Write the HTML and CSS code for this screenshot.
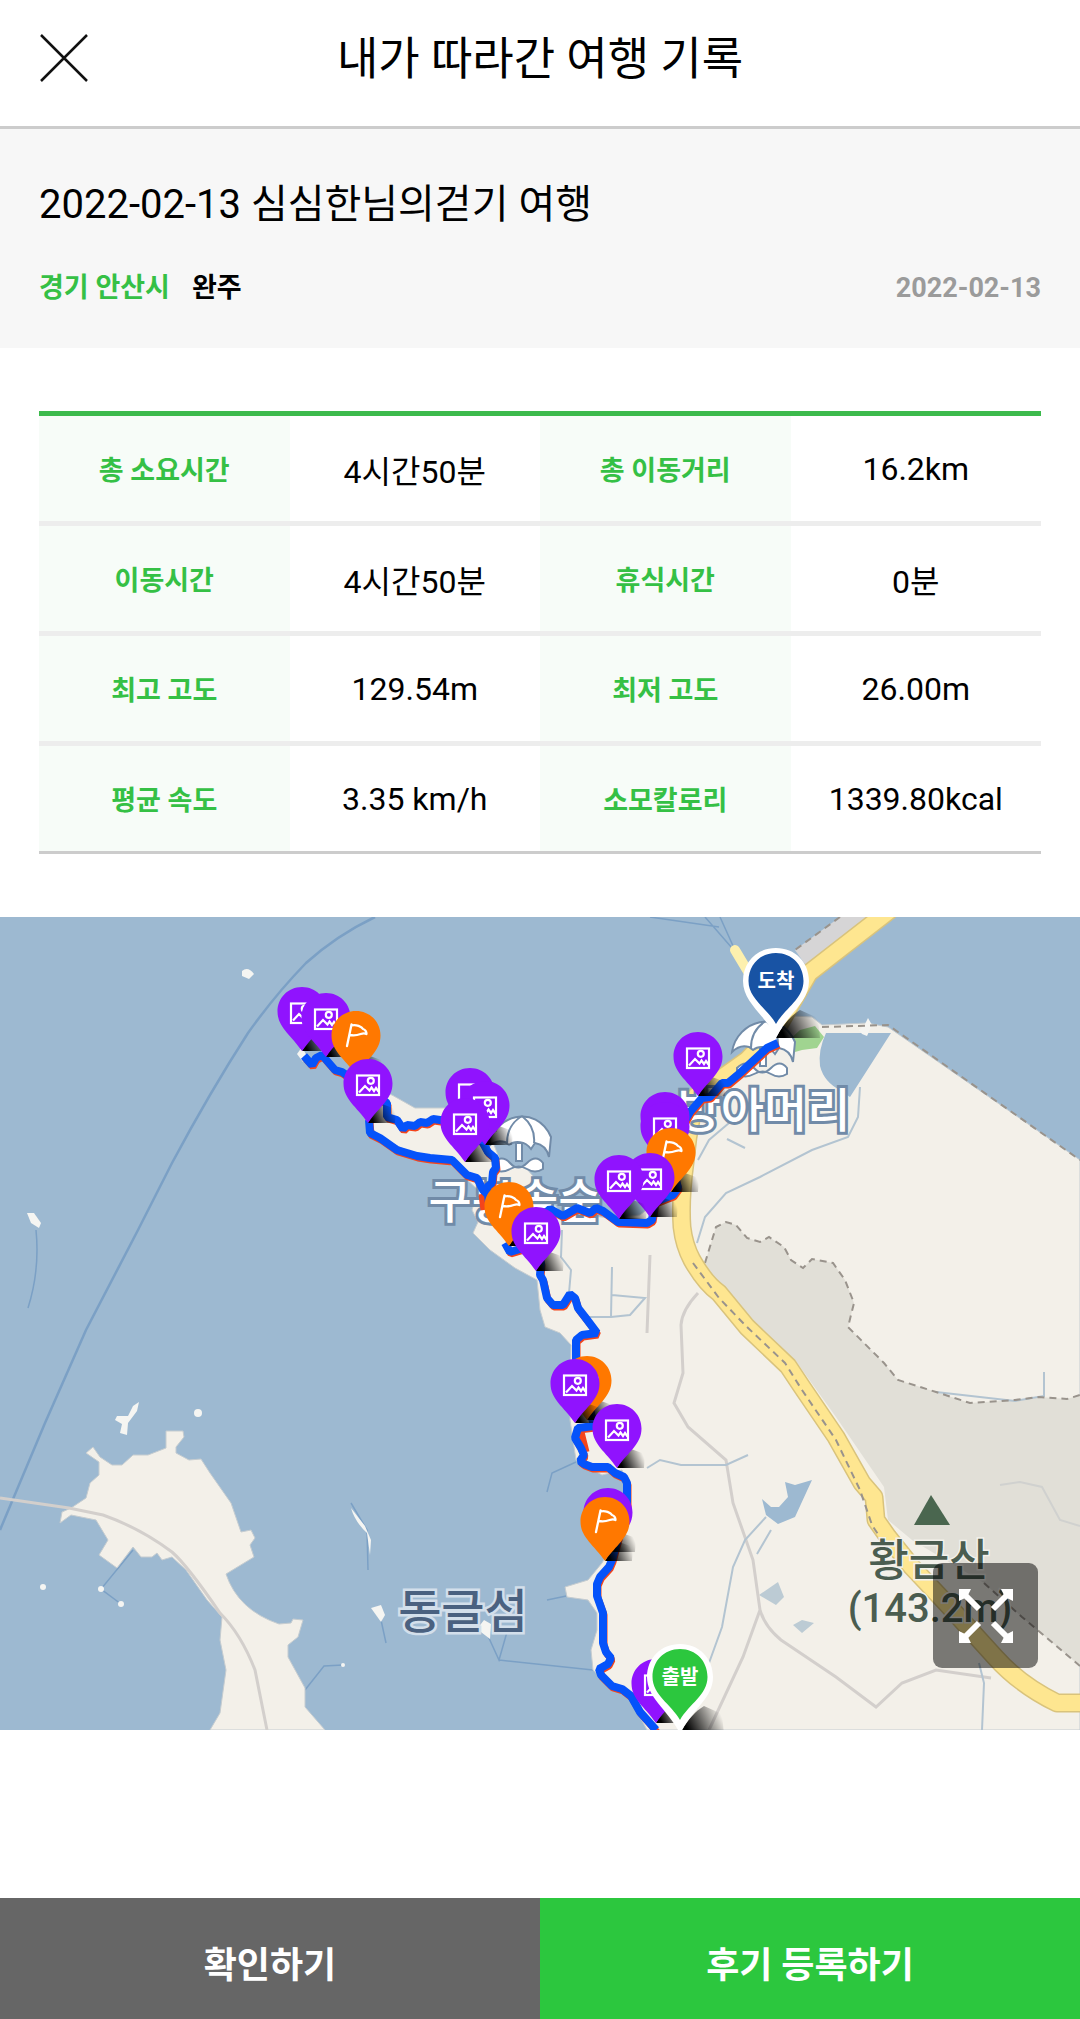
FILE: index.html
```html
<!DOCTYPE html>
<html lang="ko">
<head>
    <meta charset="UTF-8">
    <title>내가 따라간 여행 기록</title>
    <meta name="viewport" content="width=device-width, initial-scale=1.0">
    <link rel="stylesheet" href="styles.css">
</head>
<body>

    <header class="top-bar">
        <button type="button" class="close-button" aria-label="닫기">
            <svg viewBox="0 0 48 48" width="48" height="48"><path d="M1 1L47 47M47 1L1 47" stroke="#111" stroke-width="2.5" fill="none"/></svg>
        </button>
        <h1>내가 따라간 여행 기록</h1>
    </header>

    <section class="summary">
        <h2>2022-02-13 심심한님의걷기 여행</h2>
        <div class="meta">
            <span class="region">경기 안산시</span>
            <span class="status">완주</span>
            <time class="date" datetime="2022-02-13">2022-02-13</time>
        </div>
    </section>

    <main>
        <div class="record">
            <table>
                <tr>
                    <th scope="row">총 소요시간</th><td>4시간50분</td>
                    <th scope="row">총 이동거리</th><td>16.2km</td>
                </tr>
                <tr>
                    <th scope="row">이동시간</th><td>4시간50분</td>
                    <th scope="row">휴식시간</th><td>0분</td>
                </tr>
                <tr>
                    <th scope="row">최고 고도</th><td>129.54m</td>
                    <th scope="row">최저 고도</th><td>26.00m</td>
                </tr>
                <tr>
                    <th scope="row">평균 속도</th><td>3.35 km/h</td>
                    <th scope="row">소모칼로리</th><td>1339.80kcal</td>
                </tr>
            </table>
        </div>

        <div class="map">
            <svg class="map-canvas" viewBox="0 917 1080 813">
                <defs>
                    <linearGradient id="shade" x1="0" y1="0.3" x2="1" y2="0">
                        <stop offset="0" stop-color="#000"/>
                        <stop offset="0.350" stop-color="#000" stop-opacity="0.600"/>
                        <stop offset="0.850" stop-color="#000" stop-opacity="0"/>
                    </linearGradient>
                    <path id="drop" d="M0 0C-14 0-24.500 11-24.500 24.500C-24.500 40-12 47 0 64C12 47 24.500 40 24.500 24.500C24.500 11 14 0 0 0Z"/>
                    <path id="shadow" d="M0 64C3 57 8 51 14 45L28 50L27 64Z" fill="url(#shade)"/>
                    <g id="photo">
                        <use href="#shadow"/>
                        <use href="#drop" fill="#9013fe"/>
                        <g fill="none" stroke="#fff" stroke-width="2.200">
                            <rect x="-11" y="16.500" width="22" height="19.500"/>
                            <circle cx="2.800" cy="21.800" r="3"/>
                            <path d="M-9 33.500L-3 27L1.500 31.500L3.500 28.500L6 32L8 29L10.500 32.500"/>
                        </g>
                    </g>
                    <g id="flag">
                        <use href="#shadow"/>
                        <use href="#drop" fill="#ff7800"/>
                        <path d="M-4.500 13.500L-9 35M-4.500 14.500C0 13 6 16 7 18C10 19 10.500 21 10.500 23C6 20 4 26 -6 24" fill="none" stroke="#fff" stroke-width="2.300" stroke-linecap="round" stroke-linejoin="round"/>
                    </g>
                    <g id="end-pin">
                        <path d="M0 90C6 78 14 68 24 62L42 70L44 90Z" fill="url(#shade)"/>
                        <path d="M0 0C-19 0-33 14-33 33C-33 55-11 66 0 90C11 66 33 55 33 33C33 14 19 0 0 0Z" fill="#fff"/>
                        <path d="M0 5C-16 5-27.500 17-27.500 33C-27.500 51-9 60 0 76C9 60 27.500 51 27.500 33C27.500 17 16 5 0 5Z"/>
                    </g>
                    <g id="parasol" fill="#fff" stroke="#718ba8" stroke-width="2">
                        <path d="M-30 8C-25-24 18-36 33-2L31 18C29 9 23 5 17 4L13 10C7 2-3 1-9 6L-13 3C-19 1-25 3-30 8Z"/>
                        <path d="M4-23C-6-17-11-7-11 4M4-23C14-15 17-6 16 4M-2 4V22H4V4Z"/>
                        <path d="M-25 24Q-16 15-8 24T9 24T25 24V30Q17 35 9 30T-8 30T-25 30Z"/>
                    </g>
                    <path id="route-a" d="M778 1043L767 1048L740 1073L728 1083L722 1083L710 1097L702 1098L690 1112L668 1150L678 1188L673 1195L665 1198L655 1202L652 1220L647 1223L618 1222L603 1211L596 1208L590 1213L577 1208L563 1216L550 1209L536 1222L520 1249L510 1252L505 1243"/>
                    <path id="route-b" d="M489 1203L487 1187L492 1183L493 1172L496 1168L495 1158L488 1152L483 1143L464 1120L440 1120L433 1119L427 1123L420 1122L415 1126L407 1125L403 1129L397 1120L387 1117L387 1103L368 1090L342 1072L335 1070L322 1055L316 1058L312 1065L304 1056"/>
                    <path id="route-c" d="M369 1120L370 1133L380 1138L397 1150L417 1156L430 1158L452 1160L467 1175L477 1178L483 1190L487 1194"/>
                    <path id="route-d" d="M538 1255L541 1263L540 1275L543 1280L547 1298L553 1305L563 1305L570 1294L575 1298L578 1308L585 1317L597 1333L582 1335L576 1340L576 1380L590 1410L594 1426L578 1428L575 1438L581 1448L584 1455L580 1461L584 1464L592 1467L608 1467L615 1473L624 1477L627 1483L627 1505L612 1560L609 1567L600 1577L597 1584L597 1596L603 1613L603 1643L606 1652L611 1658L608 1664L599 1669L601 1675L612 1686L622 1689L631 1696L640 1712L656 1730"/>
                </defs>

                <rect class="sea" y="917" width="1080" height="813"/>

                <!-- sea routes -->
                <g class="sea-line">
                    <path d="M375 917Q337 935 306 963Q275 995 248 1033Q210 1092 172 1163L138 1230L86 1330L45 1423L0 1530" stroke-width="2.500"/>
                    <path d="M650 917L719 927M705 917L732 948M720 917L734 948"/>
                    <path d="M36 1230Q40 1270 28 1308M133 1550L101 1589L121 1604M305 1690L324 1666L343 1665M381 1620L386 1643M488 1636L499 1660L507 1632M499 1660L593 1670M576 1462L552 1473L547 1492M600 1589L547 1600M351 1503L367 1530L368 1570"/>
                </g>

                <!-- main land -->
                <path class="land" d="M812 1017L822 1025L867 1023L888 1027L1080 1160V1730H647L640 1717L631 1697L609 1687L593 1670L591 1650L597 1630L597 1613L588 1600L567 1597L565 1587L588 1580L602 1563L615 1540L626 1487L622 1470L602 1475L576 1460L573 1440L570 1420L571 1345L560 1333L545 1327L540 1310L537 1280L515 1268L490 1250L473 1233L478 1222L472 1210L478 1190L462 1175L445 1160L410 1152L385 1140L366 1123L375 1090L392 1095L415 1108L445 1108L470 1110L492 1140L502 1165L526 1168L540 1184L560 1212L610 1218L640 1215L672 1190L685 1140L700 1105L760 1055L775 1015Z"/>
                <path class="land" d="M71 1508L86 1498L90 1483L99 1475V1462L86 1453L93 1447L100 1457L112 1465H122L133 1455H148L166 1448V1431H183L184 1437L176 1447V1453L189 1460L201 1459L210 1473L231 1503L241 1532L251 1530L255 1538L250 1545L254 1557L226 1574Q238 1610 279 1624L291 1623L293 1619L303 1620L298 1637L288 1645V1657L305 1688V1707L325 1730H210L220 1713L226 1670L220 1640L222 1617L207 1600L186 1570L172 1557L162 1560L157 1553L152 1557H141L133 1547L117 1568L99 1555L108 1540L96 1520L71 1515L60 1523L62 1512Z"/>
                <g class="islet">
                    <path d="M242 971Q248 966 254 974L249 979L242 976Z"/>
                    <path d="M27 1213L34 1213L41 1223L39 1228L31 1223Z"/>
                    <path d="M133 1406L139 1402L137 1411L128 1423L127 1435L120 1433L122 1424L115 1420L117 1416L128 1416Z"/>
                    <path d="M351 1508Q355 1522 367 1533L370 1555L371 1540L365 1526Z"/>
                    <path d="M371 1608L381 1605L385 1615L381 1622Z"/>
                    <path d="M477 1629L484 1620L491 1624L490 1639Z"/>
                    <circle cx="198" cy="1413" r="4"/>
                    <circle cx="101" cy="1589" r="3"/>
                    <circle cx="121" cy="1604" r="3"/>
                    <circle cx="43" cy="1587" r="3"/>
                    <circle cx="343" cy="1665" r="2"/>
                    <path d="M302 1047L297 1054L303 1062L309 1060Z"/>
                </g>

                <!-- hills, park and water -->
                <path class="hill" d="M705 1263L716 1227L726 1222L736 1225L747 1238L760 1242L769 1237L784 1247L791 1260L803 1268L812 1259L833 1263L845 1280L854 1303L848 1327L871 1350L884 1363L898 1380L936 1392L970 1403L1015 1400L1039 1397L1067 1399L1080 1395V1666L1022 1617L984 1583L912 1540L888 1520L884 1487L836 1417L795 1360L747 1320L726 1300Z"/>
                <path class="park" d="M786 1043L800 1030L815 1026L824 1037L817 1048L802 1050L795 1052Z"/>
                <path class="sea" d="M826 1033L891 1033L850 1097L840 1090Q824 1082 820 1066Q818 1050 826 1033Z"/>
                <path class="sea" d="M762 1499L771 1507H779L788 1497L785 1482L795 1485L812 1480L795 1517L778 1524L766 1515Z"/>
                <path class="pond" d="M759 1595L778 1582L784 1597L776 1605ZM793 1625L802 1620L814 1623L802 1633Z"/>
                <path class="islet" d="M859 1030L865 1024L868 1018L872 1025L867 1036L862 1034Z"/>

                <g class="lane">
                    <path d="M0 1498L69 1508L103 1515Q140 1528 172 1552Q187 1565 220 1613Q241 1634 255 1670L267 1730"/>
                    <path d="M698 1293Q682 1310 681 1325L683 1373L674 1403L688 1427L726 1460L733 1503L753 1560L760 1610Q765 1627 781 1640L836 1677L876 1707L902 1683L936 1670L991 1678M760 1610L743 1657L709 1730M650 1255L647 1333"/>
                </g>
                <g class="stream">
                    <path d="M860 1087L858 1117L848 1137L812 1150L760 1177L726 1193L705 1217L697 1243M729 1123L709 1140L698 1160M727 1139L745 1148"/>
                    <path d="M766 1517L745 1540L733 1567L722 1627L709 1663M771 1530L757 1554M647 1468L660 1460L681 1465H726L748 1455M979 1663L984 1683L982 1730M612 1267L611 1317H588M612 1295L645 1298L630 1315L611 1317M562 1230L561 1257L571 1270L569 1293M1044 1372V1396L1015 1401L936 1392"/>
                </g>
                <path class="trail" d="M1000 1485L1020 1482L1042 1487L1060 1520L1080 1526"/>

                <path class="dash" d="M705 1263L716 1227L726 1222L736 1225L747 1238L760 1242L769 1237L784 1247L791 1260L803 1268L812 1259L833 1263L845 1280L854 1303L848 1327L871 1350L884 1363L898 1380L936 1392L970 1403L1015 1400L1039 1397L1067 1399L1080 1395M984 1583L1022 1617L1080 1666M822 1027L888 1025L1080 1160"/>

                <!-- highway -->
                <path d="M840 917L795 950L809 970L875 917Z" fill="#d6d5d6"/>
                <path class="dash" d="M840 917L795 950"/>
                <path class="pier" d="M735 950L756 985"/>
                <path class="road-edge" d="M890 910L809 973L776 1030L747 1060L695 1097L688 1137L685 1163Q680 1200 682 1227Q684 1245 692 1260Q705 1283 719 1293L747 1327L788 1366L802 1387L836 1437L862 1483L874 1497L876 1520L888 1537L912 1567L946 1603L995 1657Q1020 1685 1057 1703H1090"/>
                <path class="road" d="M890 910L809 973L776 1030L747 1060L695 1097L688 1137L685 1163Q680 1200 682 1227Q684 1245 692 1260Q705 1283 719 1293L747 1327L788 1366L802 1387L836 1437L862 1483L874 1497L876 1520L888 1537L912 1567L946 1603L995 1657Q1020 1685 1057 1703H1090"/>
                <path class="dash" d="M693 1263L719 1298L747 1327L785 1363L802 1390L836 1440L860 1490L872 1525L885 1545"/>

                <use href="#parasol" x="518" y="1139"/>
                <use href="#parasol" x="762" y="1044"/>
                <path d="M931 1495L914 1525H950Z" fill="#4a664f"/>
                <g class="place">
                    <text class="beach" x="515" y="1218">구봉솔숲</text>
                    <text class="beach" x="764" y="1127">방아머리</text>
                    <text class="island" x="463" y="1628">동글섬</text>
                    <text class="mountain" x="929" y="1576">황금산</text>
                    <text class="mountain height" x="930" y="1622">(143.2m)</text>
                </g>

                <g class="track planned" transform="translate(1 2)">
                    <use href="#route-a"/><use href="#route-b"/><use href="#route-c"/><use href="#route-d"/>
                    <path d="M481 1192L483 1208M580 1430L585 1450"/>
                </g>
                <g class="track walked">
                    <use href="#route-a"/><use href="#route-b"/><use href="#route-c"/><use href="#route-d"/>
                </g>

                <use href="#photo" x="302" y="987"/>
                <use href="#photo" x="326" y="993"/>
                <use href="#flag" x="356" y="1011"/>
                <use href="#photo" x="368" y="1059"/>
                <use href="#photo" x="470" y="1068"/>
                <use href="#photo" x="485" y="1081"/>
                <use href="#photo" x="465" y="1098"/>
                <use href="#flag" x="509" y="1182"/>
                <use href="#photo" x="536" y="1207"/>
                <use href="#photo" x="698" y="1032"/>
                <use href="#drop" x="665" y="1092" fill="#9013fe"/>
                <use href="#photo" x="665" y="1102"/>
                <use href="#flag" x="671" y="1128"/>
                <use href="#photo" x="650" y="1153"/>
                <use href="#photo" x="619" y="1155"/>
                <use href="#flag" x="587" y="1356"/>
                <use href="#photo" x="575" y="1359"/>
                <use href="#photo" x="617" y="1404"/>
                <use href="#photo" x="608" y="1488"/>
                <use href="#flag" x="605" y="1497"/>
                <use href="#photo" x="656" y="1659"/>
                <use href="#end-pin" x="776" y="948" fill="#1853a4"/>
                <use href="#end-pin" x="680" y="1644" fill="#2cc73e"/>
                <g class="pin-label">
                    <text x="776" y="988">도착</text>
                    <text x="680" y="1684">출발</text>
                </g>
            </svg>

            <button type="button" class="expand-button" aria-label="지도 크게 보기">
                <svg viewBox="0 0 54 54" width="54" height="54">
                    <g fill="none" stroke="#fff" stroke-width="6"><path d="M4 4L20 20M50 4L34 20M4 50L20 34M50 50L34 34"/></g>
                    <path d="M0 0H12L9 6L6 9L0 12ZM54 0V12L48 9L45 6L42 0ZM0 54V42L6 45L9 48L12 54ZM54 54H42L45 48L48 45L54 42Z" fill="#fff"/>
                </svg>
            </button>
        </div>
    </main>

    <footer class="bottom-bar">
        <button type="button" class="confirm">확인하기</button>
        <button type="button" class="review">후기 등록하기</button>
    </footer>

</body>
</html>
```
FILE: styles.css
```css
* {
    box-sizing: border-box;
}

body {
    margin: 0;
    min-height: 100vh;
    display: flex;
    flex-direction: column;
    background-color: #fff;
    color: #000;
    font-family: Roboto, "Noto Sans CJK KR", sans-serif;
}

h1, h2 {
    margin: 0;
    font-weight: 400;
}

button {
    padding: 0;
    border: none;
    font-family: inherit;
    cursor: pointer;
}

svg {
    display: block;
}

/* header */
.top-bar {
    display: grid;
    grid-template-columns: 48px 1fr 48px;
    align-items: center;
    padding: 26px 40px 32px;
    border-bottom: 3px solid #ccc;
}

.top-bar h1 {
    font-size: 45px;
    line-height: 68px;
    text-align: center;
}

.close-button {
    margin-top: -4px;
    background: none;
}

/* trip title */
.summary {
    padding: 46px 39px 42px;
    background-color: #f7f7f7;
}

.summary h2 {
    font-size: 40px;
    line-height: 60px;
    margin-bottom: 35px;
}

.meta {
    display: flex;
    align-items: center;
    gap: 22px;
    font-size: 27px;
    line-height: 36px;
    font-weight: 700;
}

.region {
    color: #35c045;
}

.date {
    margin-left: auto;
    color: #9b9b9b;
}

/* record table */
.record {
    padding: 63px 39px;
}

table {
    width: 100%;
    table-layout: fixed;
    border-spacing: 0;
    border-top: 5px solid #3cba4c;
    border-bottom: 3px solid #ccc;
}

th, td {
    height: 110px;
    padding: 0;
    border-bottom: 5px solid #ededed;
    text-align: center;
}

th {
    background-color: #f7fcf8;
    color: #35c045;
    font-size: 27px;
    font-weight: 700;
}

td {
    font-size: 32px;
}

tr:last-child th,
tr:last-child td {
    height: 105px;
    border-bottom: none;
}

/* map */
.map {
    position: relative;
}

.map-canvas {
    width: 100%;
    height: auto;
}

.sea {
    fill: #9db9d1;
}

.land {
    fill: #f3f0e9;
    stroke: #c5ccd0;
}

.islet {
    fill: #f5f5f2;
}

.hill {
    fill: #e1dfd7;
}

.park {
    fill: #a0d490;
}

.pond {
    fill: #bccbd4;
}

.sea-line {
    fill: none;
    stroke: #7ba0c5;
    stroke-width: 1.5;
}

.lane {
    fill: none;
    stroke: #d3cfcc;
    stroke-width: 3;
}

.stream {
    fill: none;
    stroke: #b3c4d1;
    stroke-width: 2;
}

.trail {
    fill: none;
    stroke: #d0d1cf;
    stroke-width: 2;
}

.dash {
    fill: none;
    stroke: #99938c;
    stroke-width: 2;
    stroke-dasharray: 7 5;
}

.pier {
    fill: none;
    stroke: #fdf0ae;
    stroke-width: 10;
    stroke-linecap: round;
}

.road-edge {
    fill: none;
    stroke: #d9c37c;
    stroke-width: 19;
    stroke-linejoin: round;
}

.road {
    fill: none;
    stroke: #fee690;
    stroke-width: 16;
    stroke-linejoin: round;
}

.place text {
    text-anchor: middle;
    font-weight: 500;
    paint-order: stroke;
}

.place .beach {
    font-size: 47px;
    fill: #fff;
    stroke: #718ba8;
    stroke-width: 6px;
}

.place .island {
    font-size: 47px;
    fill: #4a6180;
    stroke: #d3dfeb;
    stroke-width: 5px;
}

.place .mountain {
    font-size: 44px;
    fill: #4b5d50;
    stroke: #f3f1eb;
    stroke-width: 3px;
}

.place .height {
    font-size: 40px;
}

.track {
    fill: none;
    stroke-linejoin: bevel;
}

.planned {
    stroke: #f4451b;
    stroke-width: 7;
}

.walked {
    stroke: #0553fa;
    stroke-width: 8;
}

.pin-label {
    fill: #fff;
    font-size: 20px;
    font-weight: 700;
    text-anchor: middle;
}

.expand-button {
    position: absolute;
    right: 42px;
    bottom: 62px;
    width: 105px;
    height: 105px;
    display: flex;
    align-items: center;
    justify-content: center;
    border-radius: 9px;
    background-color: rgba(0, 0, 0, 0.5);
}

/* footer */
.bottom-bar {
    display: flex;
    margin-top: auto;
}

.bottom-bar button {
    flex: 1;
    padding: 42px 0 26px;
    color: #fff;
    font-size: 36px;
    line-height: 53px;
    font-weight: 700;
}

.confirm {
    background-color: #666;
}

.review {
    background-color: #2cc73e;
}
```
